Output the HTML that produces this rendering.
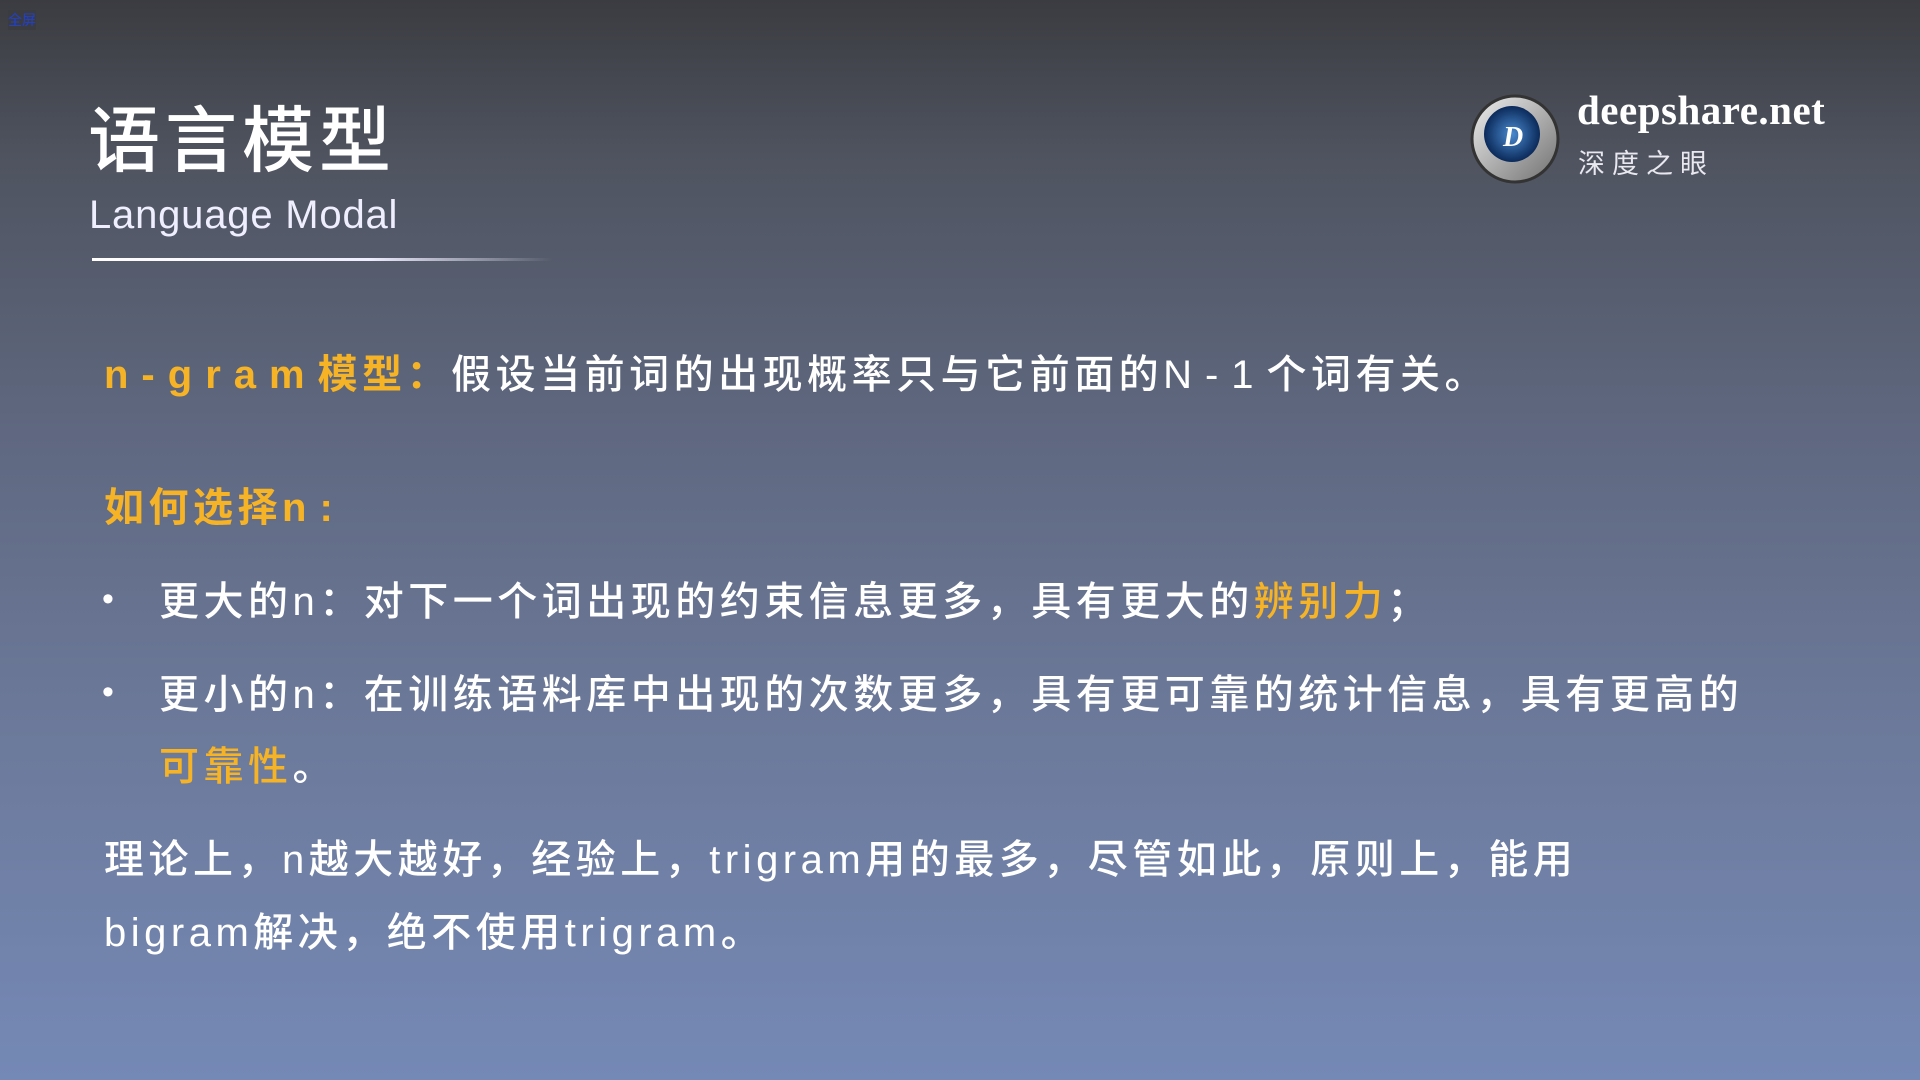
<!DOCTYPE html>
<html><head><meta charset="utf-8"><style>
html,body{margin:0;padding:0}
body{width:1920px;height:1080px;position:relative;overflow:hidden;
background:linear-gradient(180deg,#3b3c41 0%,#4f5460 15%,#5f6880 40%,#6b7898 65%,#7589b6 100%);
font-family:"Liberation Sans","Noto Sans CJK SC",sans-serif;color:#fff}
.a{position:absolute;white-space:nowrap}
.y{color:#f5b325}
.t{font-size:40px;letter-spacing:4.5px;font-weight:500}
.w{letter-spacing:13px;font-weight:bold}
.b{font-size:34px}
</style></head><body>
<div class="a" style="left:8px;top:10px;font-size:14px;color:#2040d0;background:#3b3c41">全屏</div>
<div class="a" style="left:88px;top:82px;font-size:72px;letter-spacing:5px;font-weight:500">语言模型</div>
<div class="a" style="left:89px;top:193px;font-size:40px;letter-spacing:0.8px;color:#eef">Language Modal</div>
<div class="a" style="left:92px;top:258px;width:460px;height:3px;background:linear-gradient(90deg,#fff 0%,#eef 60%,rgba(255,255,255,0) 100%)"></div>
<svg class="a" style="left:1470px;top:94px" width="90" height="90" viewBox="0 0 90 90">
<defs><radialGradient id="g" cx="50%" cy="50%" r="50%"><stop offset="0" stop-color="#4a8ad0"/><stop offset="1" stop-color="#0b2a5a"/></radialGradient>
<linearGradient id="r" x1="0" y1="0" x2="1" y2="1"><stop offset="0" stop-color="#f0f0f0"/><stop offset="1" stop-color="#707070"/></linearGradient></defs>
<circle cx="45" cy="45" r="43" fill="url(#r)"/><circle cx="45" cy="45" r="43" fill="none" stroke="#333" stroke-width="3"/>
<circle cx="42" cy="40" r="28" fill="url(#g)"/>
<text x="33" y="52" font-family="Liberation Serif" font-weight="bold" font-style="italic" font-size="28" fill="#fff">D</text></svg>
<div class="a" style="left:1577px;top:86px;font-family:'Liberation Serif',serif;font-weight:bold;font-size:41px;letter-spacing:0.5px">deepshare.net</div>
<div class="a" style="left:1578px;top:142px;font-size:27px;letter-spacing:7px;color:#e8e8ee">深度之眼</div>
<div class="a t" style="left:104px;top:342px"><span class="y" style="font-weight:bold"><span class="w">n-gram</span>模型：</span>假设当前词的出现概率只与它前面的<span class="w" style="font-weight:500">N-1</span>个词有关。</div>
<div class="a t y" style="left:104px;top:475px;font-weight:bold">如何选择<span class="w">n</span>:</div>
<div class="a t b" style="left:102px;top:580px">•</div>
<div class="a t" style="left:159px;top:569px">更大的n：对下一个词出现的约束信息更多，具有更大的<span class="y">辨别力</span>；</div>
<div class="a t b" style="left:102px;top:673px">•</div>
<div class="a t" style="left:159px;top:662px">更小的n：在训练语料库中出现的次数更多，具有更可靠的统计信息，具有更高的</div>
<div class="a t" style="left:159px;top:734px"><span class="y">可靠性</span>。</div>
<div class="a t" style="left:104px;top:827px">理论上，n越大越好，经验上，trigram用的最多，尽管如此，原则上，能用</div>
<div class="a t" style="left:104px;top:900px">bigram解决，绝不使用trigram。</div>
</body></html>
